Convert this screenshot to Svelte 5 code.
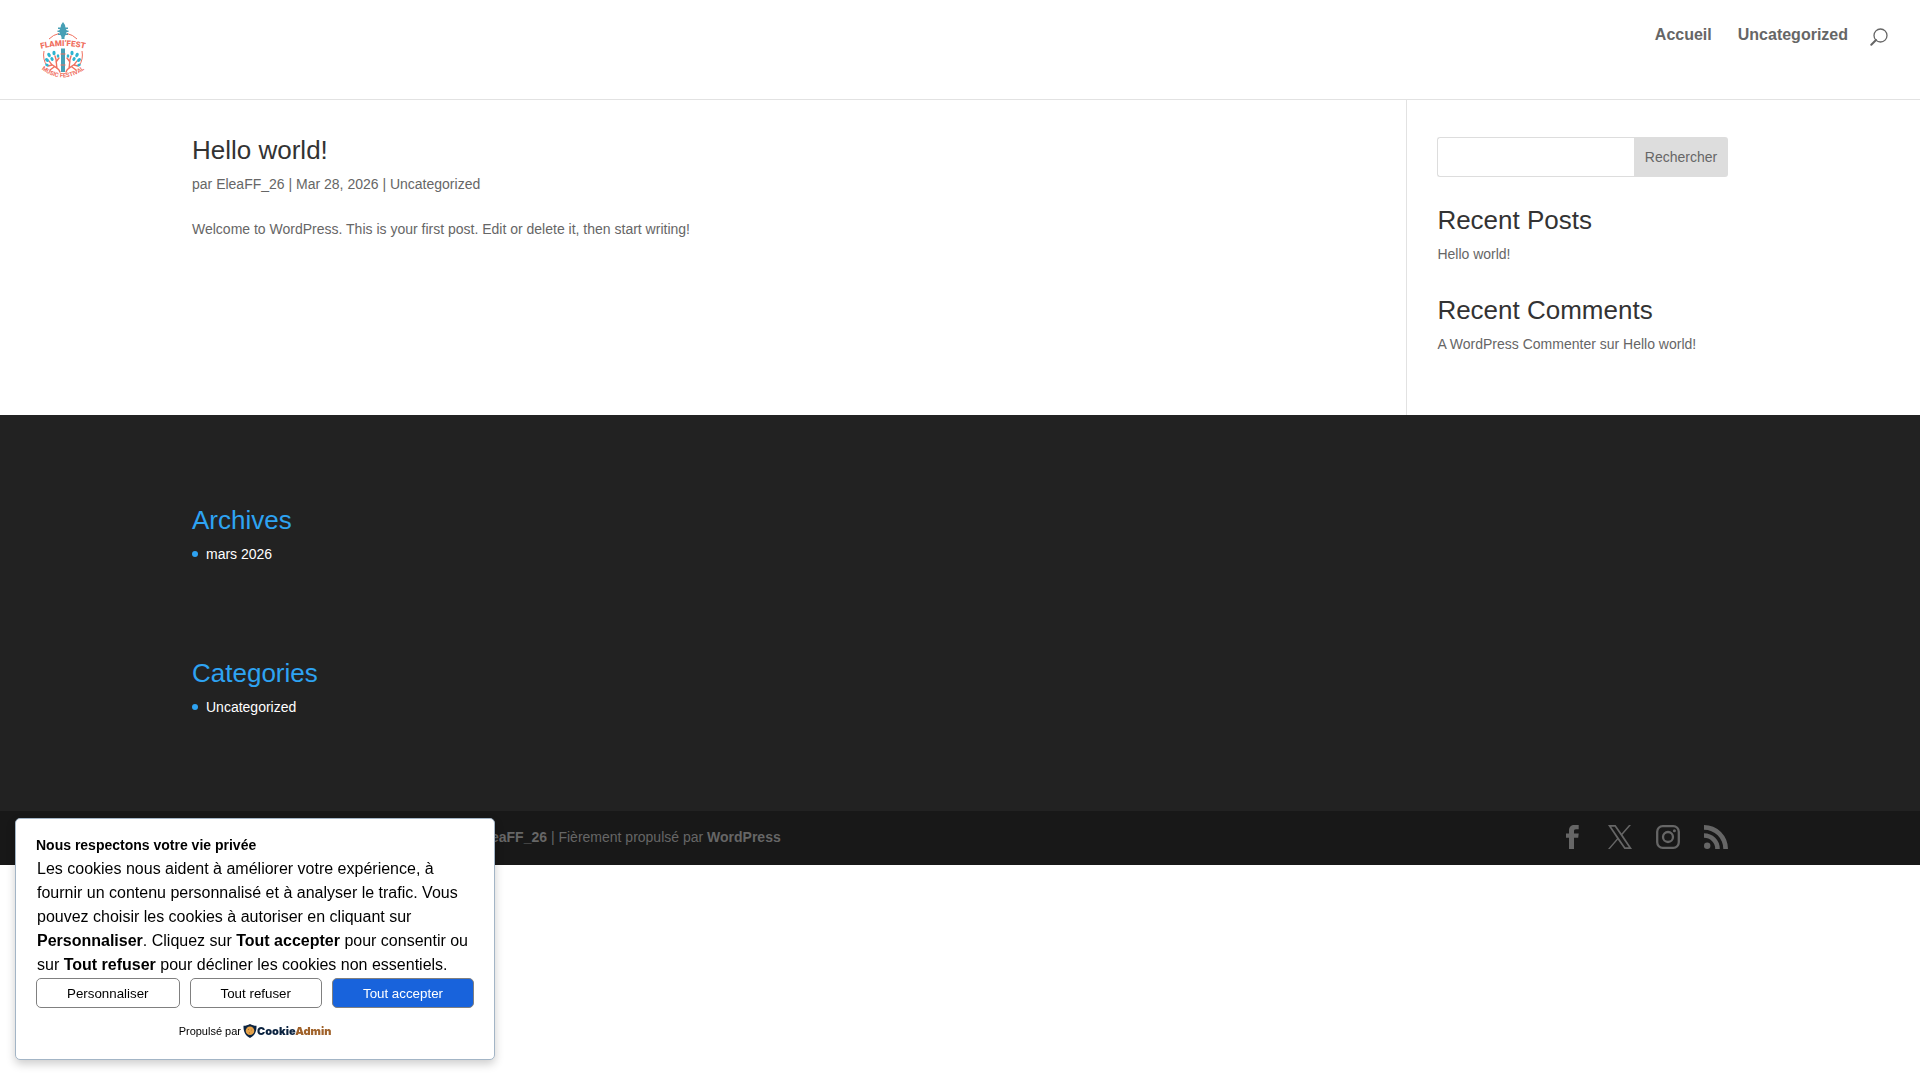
<script>
  let query = $state('');
  let consentOpen = $state(true);

  const close = () => (consentOpen = false);
</script>

<header class="site-header">
  <a class="logo" href="#home" aria-label="Flami'Fest">
    <svg viewBox="0 0 46 58" width="46" height="58" aria-hidden="true">
      <defs>
        <path id="arc-top" d="M0 27 Q23 21 46 27" />
        <path id="arc-bottom" d="M0 46 Q23 65 46 46" />
      </defs>
      <g fill="none" stroke="#f0705f" stroke-width="1">
        <path d="M9 17 A20 20 0 0 1 19 11.500M27 11.500 A20 20 0 0 1 37 17" />
        <path d="M4 29 A20 20 0 0 0 7 44M42 29 A20 20 0 0 1 39 44" />
      </g>
      <g fill="none" stroke="#f0705f" stroke-width="1.400" stroke-linecap="round">
        <path d="M20 50 C18 44 13 46 9 39M17 46 C16 42 17 39 15 34M12 43 L8 44M16 40 L19 36M14 45 L10 48" />
        <path d="M26 50 C28 44 33 46 37 39M29 46 C30 42 29 39 31 34M34 43 L38 44M30 40 L27 36M32 45 L36 48" />
      </g>
      <g fill="#2fb4d0">
        <ellipse cx="14" cy="31" rx="1.600" ry="2.200" />
        <ellipse cx="9" cy="33" rx="1.600" ry="2.200" transform="rotate(-30 9 33)" />
        <ellipse cx="7" cy="38" rx="1.600" ry="2.200" transform="rotate(-50 7 38)" />
        <ellipse cx="12" cy="37" rx="1.500" ry="2" transform="rotate(-30 12 37)" />
        <ellipse cx="18" cy="34" rx="1.300" ry="1.800" />
        <ellipse cx="7" cy="43" rx="1.300" ry="1.800" transform="rotate(-70 7 43)" />
        <ellipse cx="32" cy="31" rx="1.600" ry="2.200" />
        <ellipse cx="37" cy="33" rx="1.600" ry="2.200" transform="rotate(30 37 33)" />
        <ellipse cx="39" cy="38" rx="1.600" ry="2.200" transform="rotate(50 39 38)" />
        <ellipse cx="34" cy="37" rx="1.500" ry="2" transform="rotate(30 34 37)" />
        <ellipse cx="28" cy="34" rx="1.300" ry="1.800" />
        <ellipse cx="39" cy="43" rx="1.300" ry="1.800" transform="rotate(70 39 43)" />
      </g>
      <g fill="#479fb5">
        <path d="M23 0 L25 3 L25.500 6 L27 9 L25.500 13 L24.500 15 V17 H21.500 V15 L20.500 13 L19 9 L20.500 6 L21 3Z" />
        <path d="M18 5.500h10v1.500H18zM17.500 8.500h11V10h-11zM18 11.500h10V13H18z" />
        <path d="M21 26.500h4V50h-4z" />
      </g>
      <path d="M20.500 32h5M20.500 43h5" stroke="#f0705f" stroke-width="1" />
      <text class="logo-name" text-anchor="middle"><textPath href="#arc-top" startOffset="50%">FLAMI’FEST</textPath></text>
      <text class="logo-tag" text-anchor="middle"><textPath href="#arc-bottom" startOffset="50%">MUSIC FESTIVAL</textPath></text>
    </svg>
  </a>
  <nav class="top-nav" aria-label="Menu principal">
    <a href="#home">Accueil</a>
    <a href="#uncategorized">Uncategorized</a>
    <button class="search-toggle" type="button" aria-label="Rechercher sur le site">
      <svg viewBox="0 0 18 18" width="18" height="18" aria-hidden="true">
        <circle cx="10.500" cy="7.500" r="6.500" fill="none" stroke="#666" stroke-width="1.300" />
        <path d="M6 12 L1.300 16.700" stroke="#666" stroke-width="2" stroke-linecap="round" />
      </svg>
    </button>
  </nav>
</header>

<main class="container columns">
  <article class="post">
    <h2><a href="#hello-world">Hello world!</a></h2>
    <p class="meta">par <a href="#author">EleaFF_26</a> | Mar 28, 2026 | <a href="#uncategorized">Uncategorized</a></p>
    <p>Welcome to WordPress. This is your first post. Edit or delete it, then start writing!</p>
  </article>

  <aside class="sidebar">
    <form class="search" role="search" onsubmit={(e) => e.preventDefault()}>
      <input type="search" aria-label="Rechercher" bind:value={query} />
      <button type="submit">Rechercher</button>
    </form>
    <section>
      <h2>Recent Posts</h2>
      <ul>
        <li><a href="#hello-world">Hello world!</a></li>
      </ul>
    </section>
    <section>
      <h2>Recent Comments</h2>
      <ul>
        <li><a href="#commenter">A WordPress Commenter</a> sur <a href="#hello-world">Hello world!</a></li>
      </ul>
    </section>
  </aside>
</main>

<footer>
  <div class="container widgets">
    <section>
      <h2>Archives</h2>
      <ul>
        <li><a href="#2026-03">mars 2026</a></li>
      </ul>
    </section>
    <section>
      <h2>Categories</h2>
      <ul>
        <li><a href="#uncategorized">Uncategorized</a></li>
      </ul>
    </section>
  </div>
  <div class="bottom-bar">
    <div class="container bottom-inner">
      <p>Copyright © 2026 Flami’Fest Music Festival – <a href="#author">EleaFF_26</a> | Fièrement propulsé par <a href="#wordpress">WordPress</a></p>
      <ul class="social">
        <li>
          <a href="#facebook" aria-label="Facebook">
            <svg viewBox="0 0 24 24" width="24" height="24"><path d="M9 24V12.700H6V8.500h3V5.500C9 2 11 0 14.500 0H18.700v4.300H16c-1.600 0-2 .7-2 2v2.200h4.700l-.5 4.200H14V24z" /></svg>
          </a>
        </li>
        <li>
          <a href="#x" aria-label="X">
            <svg viewBox="0 0 24 24" width="24" height="24"><path fill-rule="evenodd" d="M0 0h7.600l6 8.400L21 0h2L14.500 9.800 24 24h-7.600L9.800 14.700 1.800 24H0l9-10.600zM3.200 1.700 17.200 22.300h3.600L6.800 1.700z" /></svg>
          </a>
        </li>
        <li>
          <a href="#instagram" aria-label="Instagram">
            <svg viewBox="0 0 24 24" width="24" height="24">
              <rect x="1.200" y="1.200" width="21.600" height="21.600" rx="5.500" fill="none" stroke="#666" stroke-width="2.300" />
              <circle cx="12" cy="12" r="5" fill="none" stroke="#666" stroke-width="2.300" />
              <circle cx="18.400" cy="5.700" r="1.500" />
            </svg>
          </a>
        </li>
        <li>
          <a href="#rss" aria-label="RSS">
            <svg viewBox="0 0 24 24" width="24" height="24">
              <circle cx="3.200" cy="20.800" r="3.200" />
              <path d="M0 8.200v4.600A11.200 11.200 0 0 1 11.200 24h4.600A15.800 15.800 0 0 0 0 8.200z" />
              <path d="M0 0v4.700A19.300 19.300 0 0 1 19.300 24H24A24 24 0 0 0 0 0z" />
            </svg>
          </a>
        </li>
      </ul>
    </div>
  </div>
</footer>

{#if consentOpen}
  <div class="consent" role="dialog" aria-labelledby="consent-title">
    <h3 id="consent-title">Nous respectons votre vie privée</h3>
    <p class="consent-text">
      Les cookies nous aident à améliorer votre expérience, à fournir un contenu personnalisé et à analyser le trafic.
      Vous pouvez choisir les cookies à autoriser en cliquant sur <strong>Personnaliser</strong>. Cliquez sur
      <strong>Tout accepter</strong> pour consentir ou sur <strong>Tout refuser</strong> pour décliner les cookies non
      essentiels.
    </p>
    <div class="consent-actions">
      <button type="button">Personnaliser</button>
      <button type="button" onclick={close}>Tout refuser</button>
      <button type="button" class="primary" onclick={close}>Tout accepter</button>
    </div>
    <div class="powered">
      <span>Propulsé par</span>
      <a href="#cookieadmin">
        <svg viewBox="0 0 14 14" width="14" height="14" aria-hidden="true">
          <path d="M7 0 C9 1.200 11 1.800 13.500 1.800 C13.800 7.500 11.500 12 7 14 C2.500 12 .2 7.500 .5 1.800 C3 1.800 5 1.200 7 0Z" fill="#0b2340" />
          <circle cx="7" cy="6.800" r="4.300" fill="#e5a24a" />
          <g fill="#9c5f22"><circle cx="5.500" cy="5.500" r=".5" /><circle cx="8.500" cy="6" r=".4" /><circle cx="6.500" cy="8.700" r=".5" /></g>
        </svg>
        <span class="brand">Cookie<span>Admin</span></span>
      </a>
    </div>
  </div>
{/if}

<style>
  :global(body) {
    background: #fff;
    color: #666;
    font: 14px/24px 'Liberation Sans', Arial, sans-serif;
  }

  h2,
  h3,
  p,
  ul {
    margin: 0;
    padding: 0;
  }

  ul {
    list-style: none;
  }

  a {
    color: inherit;
    text-decoration: none;
  }

  svg {
    display: block;
  }

  h2 {
    padding-bottom: 9px;
    color: #333;
    font-size: 26px;
    line-height: 26px;
    font-weight: 500;
  }

  .container {
    width: 80%;
    margin: 0 auto;
  }

  .site-header {
    display: flex;
    justify-content: space-between;
    align-items: flex-start;
    padding: 22px 32px 19px 40px;
    border-bottom: 1px solid #e2e2e2;
  }

  .logo-name {
    fill: #f0705f;
    font: 900 8px Roboto, sans-serif;
  }

  .logo-tag {
    fill: #f0705f;
    font: 700 6px Roboto, sans-serif;
  }

  .top-nav {
    display: flex;
    gap: 26px;
    padding-top: 1px;
    font-size: 16px;
    font-weight: 600;
  }

  .search-toggle {
    margin: 4px 0 0 -4px;
    padding: 0;
    border: 0;
    background: none;
    cursor: pointer;
  }

  .columns {
    display: flex;
  }

  .post {
    flex: 1;
    padding-top: 37px;
  }

  .meta {
    margin-bottom: 21px;
  }

  .sidebar {
    box-sizing: border-box;
    width: calc(20.875% + 1px);
    padding: 37px 0 59px 30px;
    border-left: 1px solid #e2e2e2;
  }

  .sidebar section {
    margin-top: 30px;
  }

  .sidebar section + section {
    margin-top: 31px;
  }

  .search {
    display: flex;
    height: 40px;
  }

  .search input {
    box-sizing: border-box;
    flex: 1;
    min-width: 0;
    padding: 0 8px;
    border: 1px solid #ddd;
    border-right: 0;
    border-radius: 3px 0 0 3px;
    background: #fff;
    color: #666;
    font: inherit;
  }

  .search button {
    width: 94px;
    padding: 0;
    border: 0;
    border-radius: 0 3px 3px 0;
    background: #ddd;
    color: #666;
    font: inherit;
  }

  footer {
    background: #222;
  }

  .widgets {
    display: grid;
    gap: 94px;
    padding: 92px 0;
    color: #fff;
  }

  .widgets h2 {
    color: #2ea3f2;
  }

  .widgets li {
    display: flex;
    align-items: center;
    gap: 8px;
  }

  .widgets li::before {
    content: '';
    width: 6px;
    height: 6px;
    border-radius: 3px;
    background: #2ea3f2;
  }

  .bottom-bar {
    background: #181818;
  }

  .bottom-inner {
    display: flex;
    justify-content: space-between;
    align-items: flex-start;
    padding: 14px 0 16px;
  }

  .bottom-inner p a {
    font-weight: 700;
  }

  .social {
    display: flex;
    gap: 24px;
    fill: #666;
  }

  .consent {
    position: fixed;
    bottom: 20px;
    left: 15px;
    box-sizing: border-box;
    width: 480px;
    padding: 14px 20px 16px;
    border: 1px solid #a3b5c6;
    border-radius: 5px;
    background: #fff;
    box-shadow: 0 4px 10px rgba(0, 0, 0, 0.2);
    color: #000;
  }

  .consent h3 {
    font-size: 14px;
    line-height: 24px;
  }

  .consent-text {
    padding: 0 1px;
    font-size: 16px;
  }

  .consent-actions {
    display: flex;
    gap: 10px;
    margin-top: 1px;
  }

  .consent-actions button {
    flex: 1 1 auto;
    height: 30px;
    padding: 0 16px;
    border: 1px solid #808080;
    border-radius: 5px;
    background: #fff;
    color: #000;
    font-family: inherit;
  }

  .consent-actions .primary {
    background: #1863dc;
    color: #fff;
  }

  .powered {
    display: flex;
    justify-content: center;
    align-items: center;
    gap: 2px;
    margin-top: 11px;
    font-size: 11px;
  }

  .powered a {
    display: flex;
    align-items: center;
  }

  .brand {
    color: #0b2340;
    font: 900 11px/24px Inter, sans-serif;
  }

  .brand span {
    color: #a0622a;
  }
</style>
